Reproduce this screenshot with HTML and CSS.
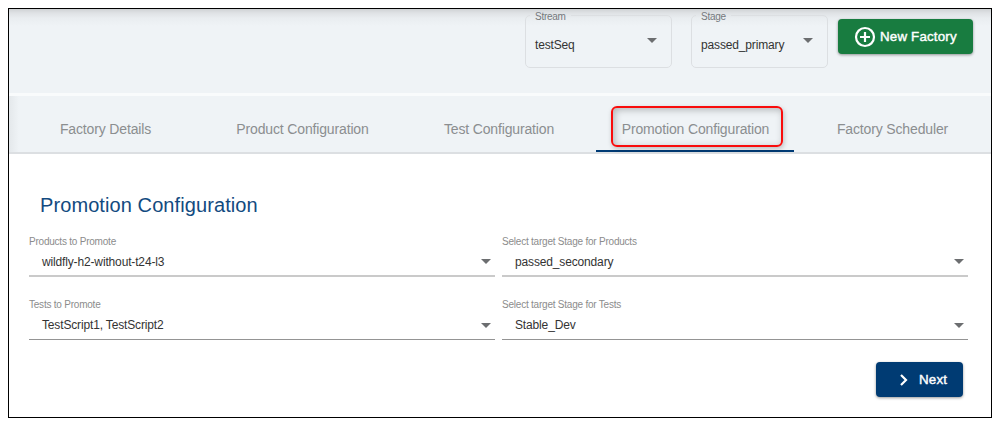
FILE: index.html
```html
<!DOCTYPE html>
<html lang="en">
<head>
<meta charset="utf-8">
<title>Promotion Configuration</title>
<link rel="stylesheet" href="styles.css">
</head>
<body>
<main class="frame">
  <header class="topbar">
    <fieldset class="outlined stream">
      <legend>Stream</legend>
      <span class="value">testSeq</span><i class="caret"></i>
    </fieldset>
    <fieldset class="outlined stage">
      <legend>Stage</legend>
      <span class="value">passed_primary</span><i class="caret"></i>
    </fieldset>
    <button class="btn btn-green">
      <svg width="22" height="22" viewBox="0 0 22 22" fill="none" stroke="#fff" stroke-width="2.2"><circle cx="11" cy="11" r="9"/><path d="M11 6v10M6 11h10"/></svg>
      <span>New Factory</span>
    </button>
  </header>
  <nav class="tabs">
    <a class="tab">Factory Details</a>
    <a class="tab">Product Configuration</a>
    <a class="tab">Test Configuration</a>
    <a class="tab active"><span class="highlight">Promotion Configuration</span></a>
    <a class="tab">Factory Scheduler</a>
  </nav>
  <section class="content">
    <h1>Promotion Configuration</h1>
    <div class="grid">
      <div class="field thick"><label>Products to Promote</label><div class="select"><span class="value">wildfly-h2-without-t24-l3</span><i class="caret"></i></div></div>
      <div class="field thick"><label>Select target Stage for Products</label><div class="select"><span class="value">passed_secondary</span><i class="caret"></i></div></div>
      <div class="field"><label>Tests to Promote</label><div class="select"><span class="value">TestScript1, TestScript2</span><i class="caret"></i></div></div>
      <div class="field"><label>Select target Stage for Tests</label><div class="select"><span class="value">Stable_Dev</span><i class="caret"></i></div></div>
    </div>
    <div class="actions">
      <button class="btn btn-blue">
        <svg width="10" height="12" viewBox="0 0 10 12" fill="none" stroke="#fff" stroke-width="2.2"><path d="M2 1l5 5-5 5"/></svg>
        <span>Next</span>
      </button>
    </div>
  </section>
</main>
</body>
</html>
```
FILE: styles.css
```css
* { box-sizing: border-box; }
body {
  margin: 0;
  padding: 8px;
  background: #fff;
  font-family: "Liberation Sans", Arial, sans-serif;
}
.frame {
  width: 984px;
  height: 410px;
  border: 1px solid #000;
  overflow: hidden;
}
.topbar {
  display: flex;
  align-items: flex-start;
  height: 84px;
  padding-left: 516px;
  background: linear-gradient(#cfd2d4, #dfe2e5 4px, #e9edf0 9px, #eff3f6 17px);
}
.outlined {
  display: flex;
  margin: 0;
  padding: 0 0 0 4px;
  min-width: 0;
  height: 58px;
  margin-top: 1px;
  border: 1px solid #dcdfe2;
  border-radius: 5px;
}
.outlined legend {
  height: 10px;
  margin: 0;
  padding: 0 5px;
  font-size: 10px;
  line-height: 14px;
  letter-spacing: -.26px;
  color: #75797d;
}
.outlined .value {
  flex: 1;
  margin: 17px 0 0 5px;
  line-height: 16px;
}
.outlined .caret { margin: 18px 14px 0 0; }
.stream { width: 147px; }
.stage { width: 137px; margin-left: 19px; }
.value {
  font-size: 12px;
  letter-spacing: -.15px;
  color: #333;
}
.caret {
  width: 0;
  height: 0;
  border: 5px solid transparent;
  border-top-color: #6c6e70;
  border-bottom: 0;
}
.btn {
  display: flex;
  align-items: center;
  padding: 0;
  border: 0;
  border-radius: 4px;
  font: 13.33px/16px "Liberation Sans", Arial, sans-serif;
  letter-spacing: .18px;
  color: #fff;
  -webkit-text-stroke: .4px #fff;
  box-shadow: 0 1px 3px rgba(0, 0, 0, .4);
}
.btn-green {
  width: 135px;
  height: 35px;
  margin: 10px 0 0 10px;
  padding-left: 16px;
  gap: 4px;
  background: #187c40;
}
.tabs {
  display: flex;
  height: 61px;
  padding-left: 17px;
  border-top: 3px solid #f9fbfc;
  border-bottom: 2px solid #dcdfe2;
  background: linear-gradient(90deg, #e4e8eb, #eff3f6 10px);
}
.tab {
  display: flex;
  align-items: center;
  justify-content: center;
  width: 197px;
  height: 56px;
  padding-top: 11px;
  border-bottom: 2px solid transparent;
  font-size: 14px;
  letter-spacing: -.15px;
  color: #8b8e90;
}
.tab:first-child { width: 159px; }
.tab:nth-child(2) { width: 235px; }
.tab:nth-child(3) { width: 176px; padding-right: 18px; }
.tab.active { width: 198px; border-color: #003b75; padding: 6px 0 0 3px; }
.highlight {
  display: flex;
  align-items: center;
  justify-content: center;
  width: 172px;
  height: 41px;
  padding: 5px 2px 0 0;
  border: 2px solid #f90c0c;
  border-radius: 6px;
  box-shadow: 1px 2px 5px rgba(0, 0, 0, .22), inset 2px 2px 7px rgba(0, 0, 0, .25);
}
.content { padding: 37px 23px 0 20px; }
h1 {
  margin: 0 0 0 11px;
  font-size: 20px;
  line-height: 28px;
  font-weight: 400;
  letter-spacing: .09px;
  color: #124a80;
}
.grid {
  display: grid;
  grid-template-columns: 466px 466px;
  column-gap: 7px;
}
.field {
  height: 63px;
  padding-top: 17px;
}
.field label {
  display: block;
  font-size: 10px;
  line-height: 12px;
  letter-spacing: -.22px;
  color: #8c8c8c;
}
.select {
  display: flex;
  align-items: center;
  height: 29px;
  padding: 0 4px 0 13px;
  border-bottom: 1px solid #949494;
}
.thick .select { border-bottom: 2px solid #cacaca; }
.select .value { flex: 1; line-height: 16px; }
.actions { display: flex; justify-content: flex-end; padding: 17px 5px 0 0; }
.btn-blue {
  width: 87px;
  height: 35px;
  padding-left: 23px;
  gap: 10px;
  background: #003b73;
}
```
